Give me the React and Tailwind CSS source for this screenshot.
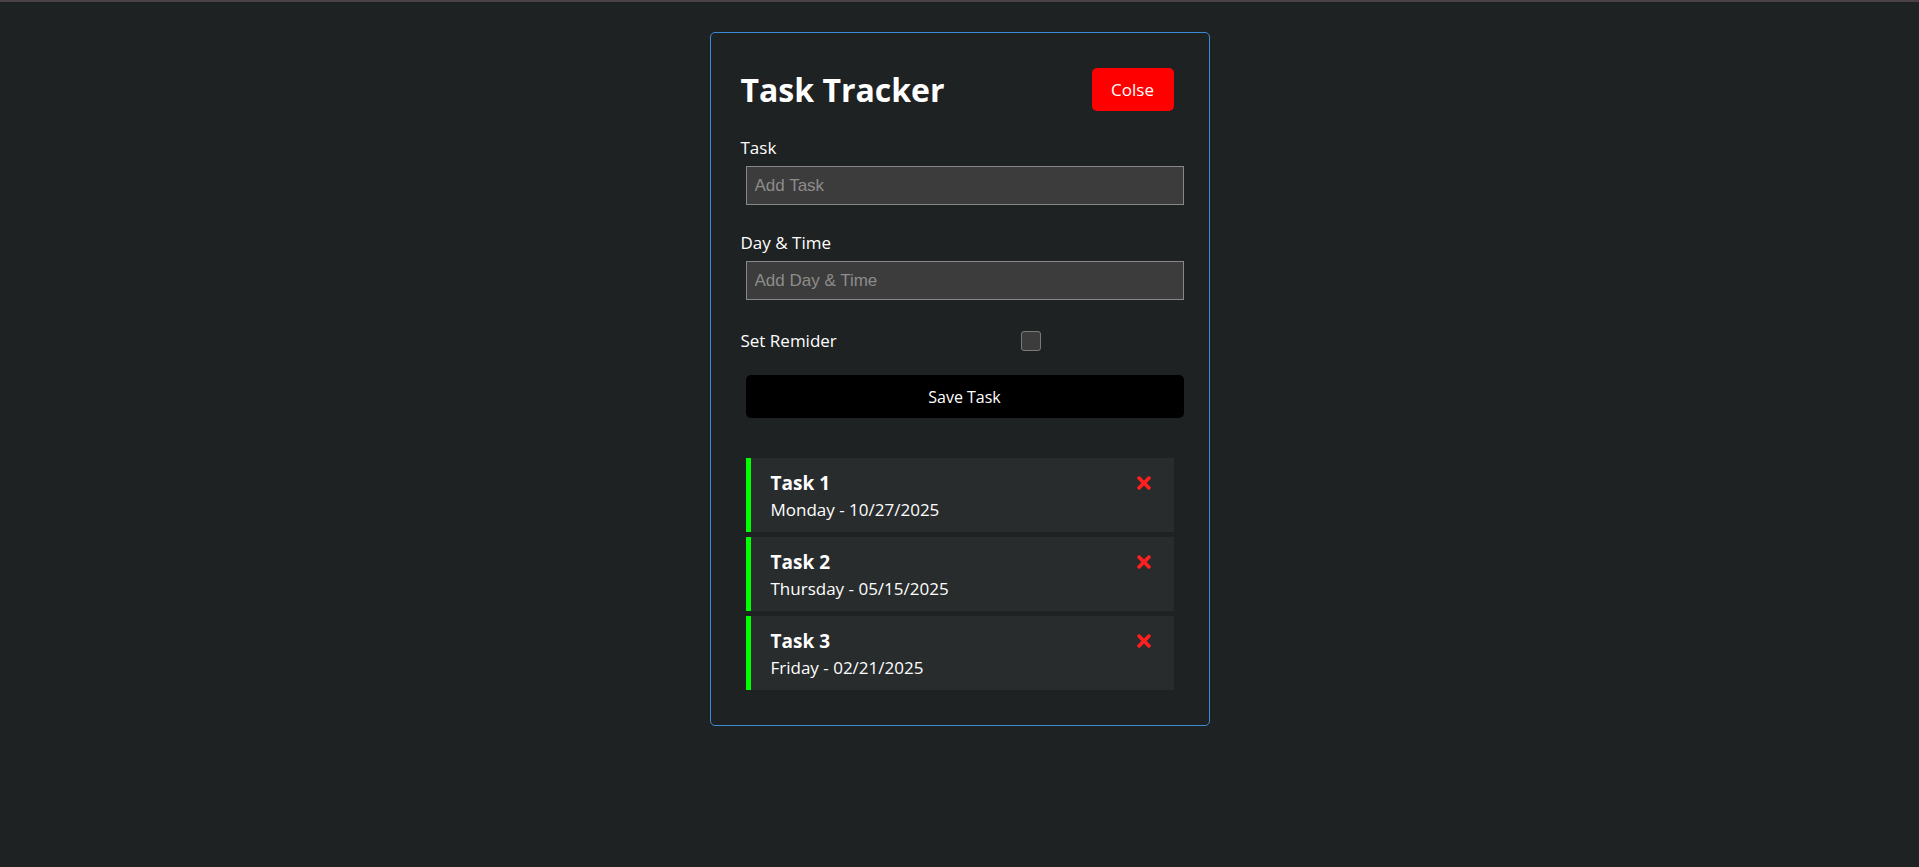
import { FaTimes } from 'react-icons/fa';

const tasks = [
  { id: 1, text: 'Task 1', day: 'Monday - 10/27/2025' },
  { id: 2, text: 'Task 2', day: 'Thursday - 05/15/2025' },
  { id: 3, text: 'Task 3', day: 'Friday - 02/21/2025' },
];

function Task({ task }) {
  return (
    <div className="mx-[5px] border-l-[5px] border-[#00ff00] bg-[#282c2d] px-[20px] py-[10px]">
      <h3 className="flex items-center justify-between text-[19px] font-bold leading-[30px]">
        {task.text}
        <FaTimes className="text-[20px] text-[#ff1f1f]" />
      </h3>
      <p className="text-[17px] leading-[24px]">{task.day}</p>
    </div>
  );
}

export default function App() {
  return (
    <div className="min-h-screen border-t-2 border-[#4a4246] bg-[#1f2223] font-['Open_Sans',sans-serif] text-white">
      <div className="mx-auto mt-[30px] w-[500px] rounded-[5px] border border-[#3d8bd8] p-[30px]">
        <header className="flex items-center justify-between">
          <h1 className="text-[32px] font-bold leading-[48px]">Task Tracker</h1>
          <button className="m-[5px] h-[43px] w-[82px] rounded-[5px] bg-[#ff0000] text-[17px] text-white">
            Colse
          </button>
        </header>

        <form className="flex flex-col">
          <div className="mt-[20px] flex flex-col">
            <label className="text-[17px] leading-[24px]">Task</label>
            <input
              type="text"
              placeholder="Add Task"
              className="mx-[5px] mt-[6px] h-[39px] w-full border border-[#888] bg-[#3c3c3c] px-[8px] font-['Liberation_Sans',Arial,sans-serif] text-[17px] text-white outline-none placeholder:text-[#8c8c8c]"
            />
          </div>
          <div className="mt-[26px] flex flex-col">
            <label className="text-[17px] leading-[24px]">Day &amp; Time</label>
            <input
              type="text"
              placeholder="Add Day & Time"
              className="mx-[5px] mt-[6px] h-[39px] w-full border border-[#888] bg-[#3c3c3c] px-[8px] font-['Liberation_Sans',Arial,sans-serif] text-[17px] text-white outline-none placeholder:text-[#8c8c8c]"
            />
          </div>
          <div className="mt-[29px] flex h-[24px] items-center">
            <label className="flex-1 text-[17px] leading-[24px]">Set Remider</label>
            <div className="flex flex-[2] justify-center">
              <input
                type="checkbox"
                className="mr-[3px] h-[20px] w-[20px] appearance-none rounded-[3px] border border-[#7a7a7a] bg-[#3c3c3c]"
              />
            </div>
          </div>
          <button
            type="button"
            className="mx-[5px] mt-[22px] h-[43px] w-full rounded-[5px] bg-black text-[16px] text-white"
          >
            Save Task
          </button>
        </form>

        <div className="mt-[40px] flex flex-col gap-[5px] pb-[5px]">
          {tasks.map((t) => (
            <Task key={t.id} task={t} />
          ))}
        </div>
      </div>
    </div>
  );
}
